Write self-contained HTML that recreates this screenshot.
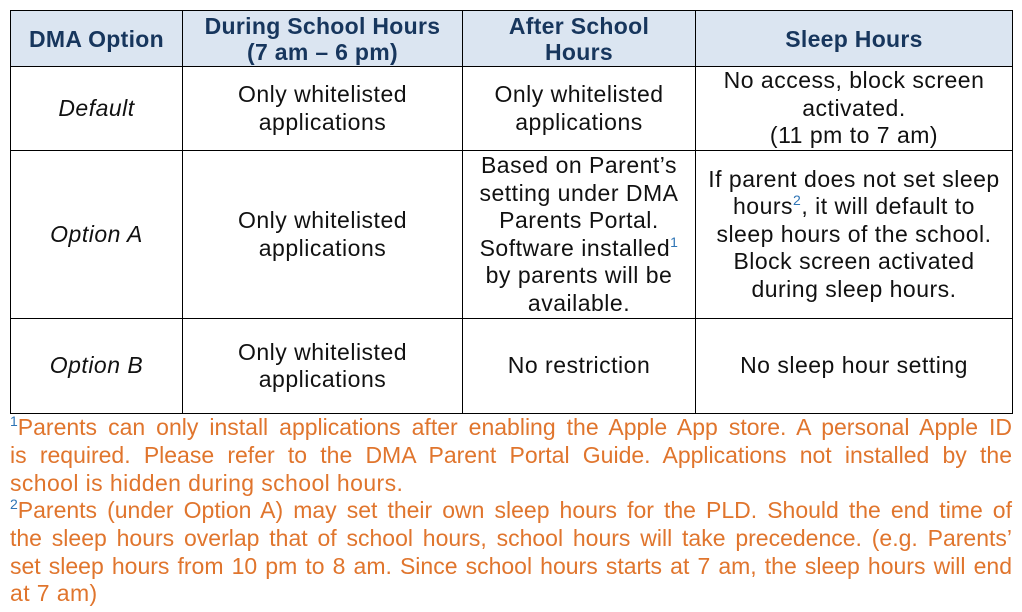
<!DOCTYPE html>
<html><head><meta charset="utf-8"><style>
body{margin:0;width:1022px;height:612px;background:#fff;font-family:"Liberation Sans",Arial,sans-serif;position:relative;overflow:hidden}
table{position:absolute;left:10px;top:10px;border-collapse:collapse;table-layout:fixed}
td,th{border:1.5px solid #000;text-align:center;vertical-align:middle;font-size:23px;letter-spacing:0.5px;line-height:27.5px;padding:0 2px;color:#111}
th{background:#dbe5f1;color:#17365d;font-weight:bold;line-height:26px;letter-spacing:0.3px}
td.i{font-style:italic}
sup{color:#2e74b5;font-size:14px;vertical-align:9px;line-height:0}
.fn{position:absolute;left:10px;width:1002px;font-size:23px;letter-spacing:0.4px;color:#e0752d;line-height:27.7px;white-space:nowrap}
.j{text-align:justify;text-align-last:justify;white-space:normal;letter-spacing:0}
</style></head><body>
<table>
<colgroup><col style="width:172px"><col style="width:280px"><col style="width:233px"><col style="width:317px"></colgroup>
<tr style="height:56px"><th>DMA Option</th><th>During School Hours<br>(7 am – 6 pm)</th><th>After School<br>Hours</th><th>Sleep Hours</th></tr>
<tr style="height:84px"><td class="i">Default</td><td>Only whitelisted<br>applications</td><td>Only whitelisted<br>applications</td><td>No access, block screen<br>activated.<br>(11 pm to 7 am)</td></tr>
<tr style="height:168px"><td class="i">Option A</td><td>Only whitelisted<br>applications</td><td>Based on Parent’s<br>setting under DMA<br>Parents Portal.<br>Software installed<sup>1</sup><br>by parents will be<br>available.</td><td>If parent does not set sleep<br>hours<sup>2</sup>, it will default to<br>sleep hours of the school.<br>Block screen activated<br>during sleep hours.</td></tr>
<tr style="height:95px"><td class="i">Option B</td><td>Only whitelisted<br>applications</td><td>No restriction</td><td>No sleep hour setting</td></tr>
</table>
<div class="fn j" style="top:414px"><sup>1</sup>Parents can only install applications after enabling the Apple App store. A personal Apple ID</div>
<div class="fn j" style="top:442px">is required. Please refer to the DMA Parent Portal Guide. Applications not installed by the</div>
<div class="fn" style="top:470px">school is hidden during school hours.</div>
<div class="fn j" style="top:497px"><sup>2</sup>Parents (under Option A) may set their own sleep hours for the PLD. Should the end time of</div>
<div class="fn j" style="top:525px">the sleep hours overlap that of school hours, school hours will take precedence. (e.g. Parents’</div>
<div class="fn j" style="top:553px">set sleep hours from 10 pm to 8 am. Since school hours starts at 7 am, the sleep hours will end</div>
<div class="fn" style="top:580px">at 7 am)</div>
</body></html>
